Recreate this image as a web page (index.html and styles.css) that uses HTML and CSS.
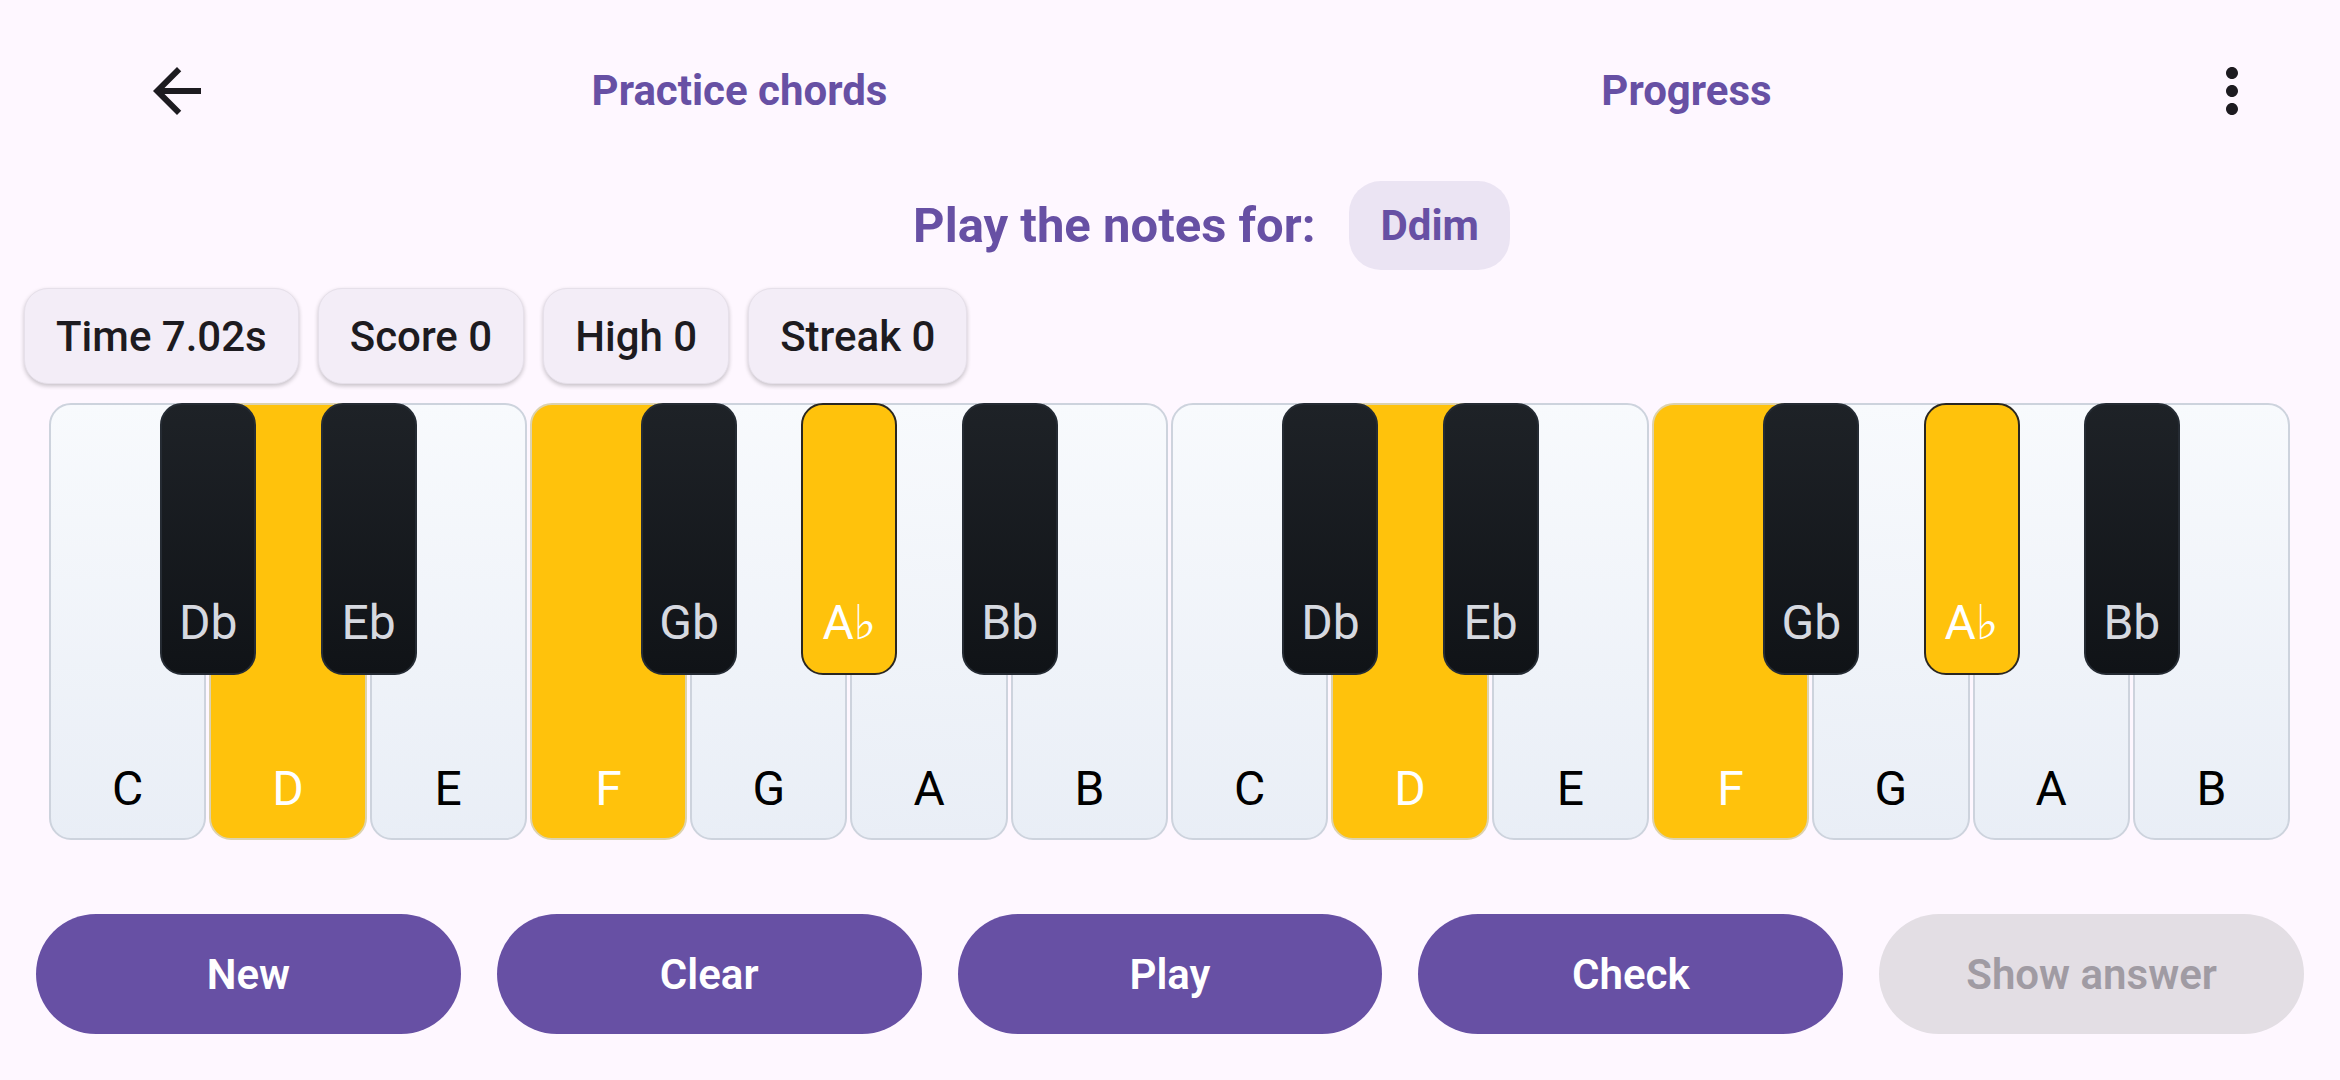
FILE: index.html
```html
<!DOCTYPE html>
<html lang="en">
<head>
<meta charset="utf-8">
<title>Practice chords</title>
<link rel="stylesheet" href="styles.css">
</head>
<body>
<div class="app">
  <header class="topbar">
    <button class="icon-btn" aria-label="Back">
      <svg viewBox="0 0 24 24"><path d="M20 11H7.83l5.59-5.59L12 4l-8 8 8 8 1.41-1.41L7.83 13H20v-2z"/></svg>
    </button>
    <nav class="tabs">
      <div class="tab">Practice chords</div>
      <div class="tab">Progress</div>
    </nav>
    <button class="icon-btn" aria-label="More">
      <svg viewBox="0 0 24 24"><path d="M12 8c1.1 0 2-.9 2-2s-.9-2-2-2-2 .9-2 2 .9 2 2 2zm0 2c-1.1 0-2 .9-2 2s.9 2 2 2 2-.9 2-2-.9-2-2-2zm0 6c-1.1 0-2 .9-2 2s.9 2 2 2 2-.9 2-2-.9-2-2-2z"/></svg>
    </button>
  </header>

  <section class="prompt">
    <span class="prompt-text">Play the notes for:</span>
    <span class="chord-chip">Ddim</span>
  </section>

  <section class="stats">
    <div class="stat">Time 7.02s</div>
    <div class="stat">Score 0</div>
    <div class="stat">High 0</div>
    <div class="stat">Streak 0</div>
  </section>

  <section class="keyboard">
    <div class="white"><span class="label">C</span><div class="black"><span class="label">Db</span></div></div>
    <div class="white on"><span class="label">D</span><div class="black"><span class="label">Eb</span></div></div>
    <div class="white"><span class="label">E</span></div>
    <div class="white on"><span class="label">F</span><div class="black"><span class="label">Gb</span></div></div>
    <div class="white"><span class="label">G</span><div class="black on"><span class="label">A♭</span></div></div>
    <div class="white"><span class="label">A</span><div class="black"><span class="label">Bb</span></div></div>
    <div class="white"><span class="label">B</span></div>
    <div class="white"><span class="label">C</span><div class="black"><span class="label">Db</span></div></div>
    <div class="white on"><span class="label">D</span><div class="black"><span class="label">Eb</span></div></div>
    <div class="white"><span class="label">E</span></div>
    <div class="white on"><span class="label">F</span><div class="black"><span class="label">Gb</span></div></div>
    <div class="white"><span class="label">G</span><div class="black on"><span class="label">A♭</span></div></div>
    <div class="white"><span class="label">A</span><div class="black"><span class="label">Bb</span></div></div>
    <div class="white"><span class="label">B</span></div>
  </section>

  <section class="actions">
    <button class="btn">New</button>
    <button class="btn">Clear</button>
    <button class="btn">Play</button>
    <button class="btn">Check</button>
    <button class="btn disabled">Show answer</button>
  </section>
</div>
</body>
</html>
```

FILE: styles.css
```css
* { box-sizing: border-box; }

html, body {
  margin: 0;
  padding: 0;
  background: #FEF7FF;
}

body {
  font-family: Roboto, "Noto Sans", "DejaVu Sans", sans-serif;
  color: #1D1B20;
  width: 2340px;
  height: 1080px;
  overflow: hidden;
}

button {
  font-family: inherit;
  border: none;
  background: none;
  padding: 0;
  margin: 0;
}

/* ---------- top bar ---------- */
.topbar {
  display: flex;
  align-items: center;
  height: 181px;
  padding: 0 36px 0 105px;
}

.icon-btn {
  width: 144px;
  height: 144px;
  display: flex;
  align-items: center;
  justify-content: center;
  flex: none;
}

.icon-btn svg {
  width: 72px;
  height: 72px;
  fill: #1D1B20;
}

.tabs {
  flex: 1;
  display: flex;
  margin-left: 17px;
}

.tab {
  flex: 1;
  text-align: center;
  font-size: 42px;
  font-weight: 700;
  color: #6750A4;
}

/* ---------- prompt ---------- */
.prompt {
  display: flex;
  align-items: center;
  justify-content: center;
  gap: 34px;
  height: 89px;
  padding-left: 83px;
}

.prompt-text {
  font-size: 49px;
  font-weight: 700;
  color: #6750A4;
}

.chord-chip {
  height: 89px;
  display: flex;
  align-items: center;
  padding: 0 31px;
  border-radius: 32px;
  background: #EBE4F3;
  color: #6750A4;
  font-size: 42px;
  font-weight: 700;
}

/* ---------- stats ---------- */
.stats {
  display: flex;
  gap: 19px;
  padding-left: 24px;
  margin-top: 18px;
}

.stat {
  height: 96px;
  display: flex;
  align-items: center;
  padding: 0 31px;
  border-radius: 24px;
  background: #F3EDF7;
  border: 1px solid #E6E0EA;
  box-shadow: 0 2px 4px rgba(0, 0, 0, 0.22);
  font-size: 42px;
  font-weight: 500;
  color: #1D1B20;
}

/* ---------- keyboard ---------- */
.keyboard {
  display: flex;
  gap: 3px;
  margin: 19px 0 0 49px;
}

.white {
  position: relative;
  width: 157.3px;
  height: 437px;
  border: 2px solid #CDD3DD;
  border-radius: 22px;
  background: linear-gradient(180deg, #F8FAFD 0%, #E9EEF6 100%);
  display: flex;
  flex-direction: column;
  justify-content: flex-end;
  align-items: center;
  padding-bottom: 25px;
}

.white.on {
  background: #FFC20C;
  border-color: #DCD2AE;
}

.label {
  font-size: 48px;
  line-height: 48px;
  font-weight: 400;
  color: #000;
}

.white.on > .label {
  color: #FFFFFF;
}

.black {
  position: absolute;
  z-index: 2;
  top: -2px;
  right: -52px;
  width: 96px;
  height: 272px;
  border: 2px solid #252B33;
  border-radius: 22px;
  background: linear-gradient(180deg, #1E2227 0%, #101317 100%);
  display: flex;
  flex-direction: column;
  justify-content: flex-end;
  align-items: center;
  padding-bottom: 26px;
}

.black .label {
  color: #D6D9E0;
}

.black.on {
  background: #FFC20C;
  border-color: #2A2721;
}

.black.on .label {
  color: #FFFFFF;
}

/* ---------- actions ---------- */
.actions {
  display: flex;
  gap: 36px;
  padding: 0 36px;
  margin-top: 74px;
}

.btn {
  flex: 1;
  height: 120px;
  border-radius: 60px;
  background: #6750A4;
  color: #FFFFFF;
  font-size: 42px;
  font-weight: 600;
}

.btn.disabled {
  background: #E3DEE4;
  color: #A09BA3;
}
```
